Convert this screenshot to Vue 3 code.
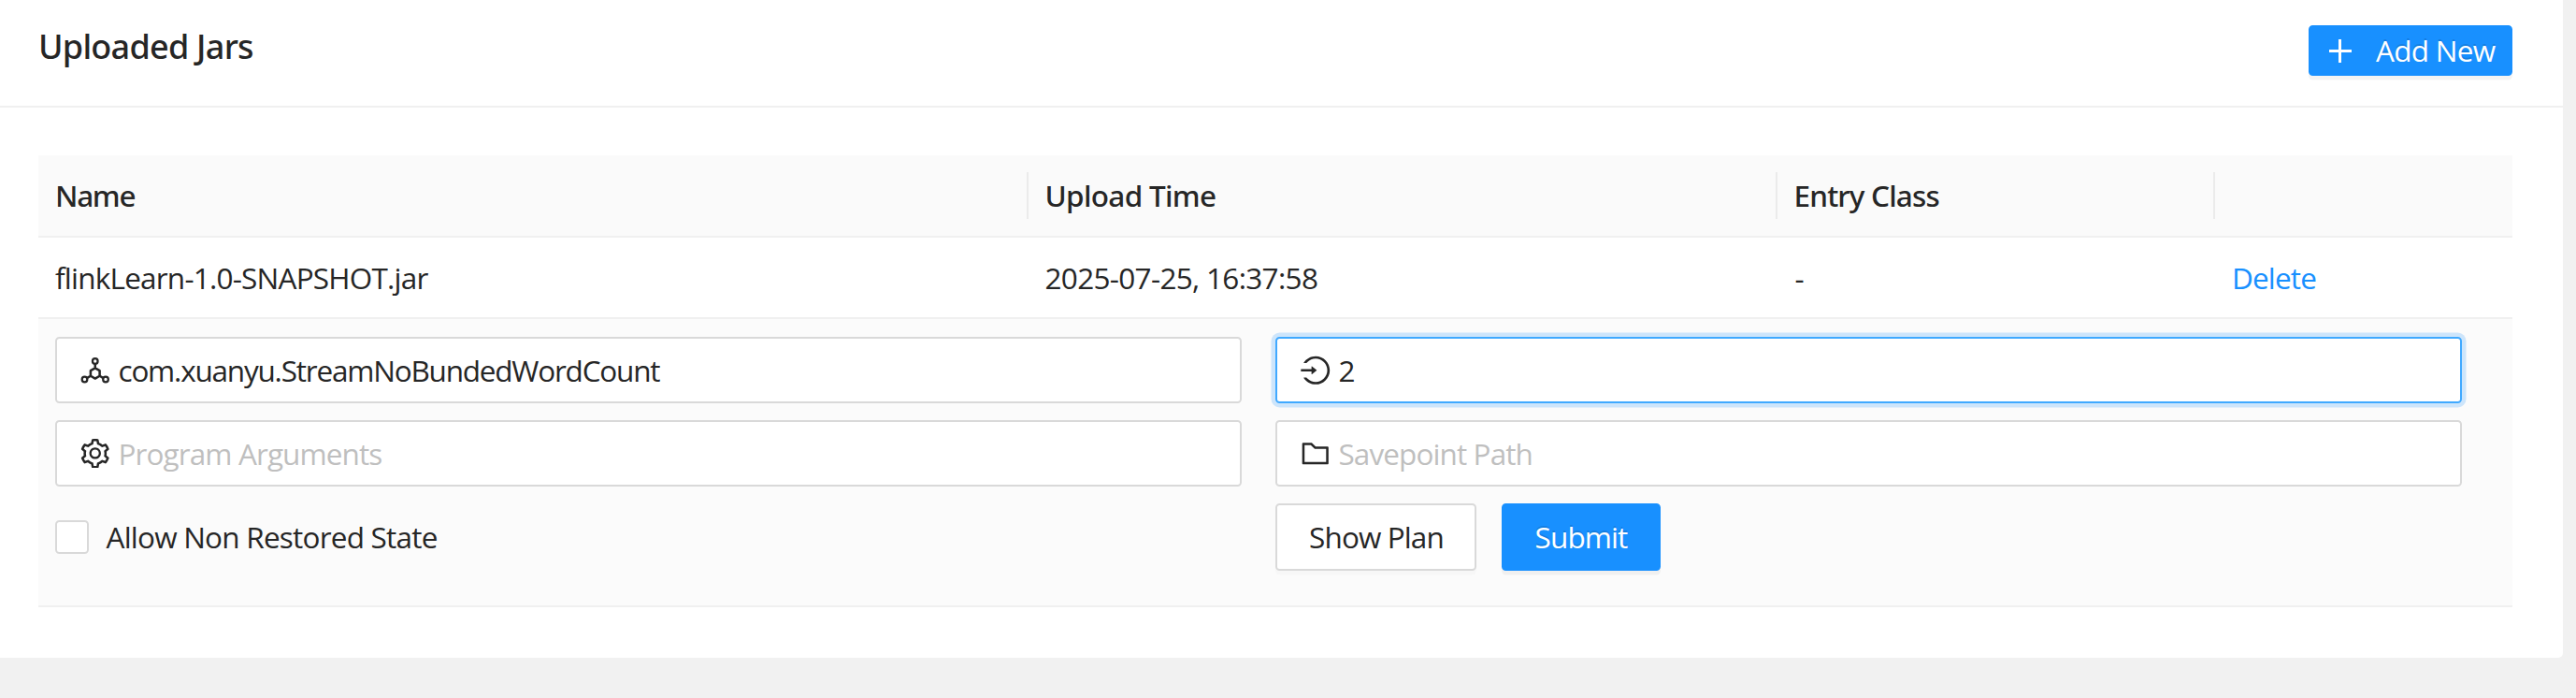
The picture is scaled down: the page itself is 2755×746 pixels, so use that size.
<script setup>
import { ref } from 'vue'

const entryClass = ref('com.xuanyu.StreamNoBundedWordCount')
const parallelism = ref('2')
const programArgs = ref('')
const savepointPath = ref('')
const allowNonRestored = ref(false)
</script>

<template>
  <div class="card">
    <header class="card-head">
      <h1 class="title">Uploaded Jars</h1>
      <button class="btn primary add">
        <svg class="plus" viewBox="0 0 24 25" aria-hidden="true">
          <path d="M0 12.5h24M11.5 0v25" stroke="currentColor" stroke-width="3" />
        </svg>
        <span>Add New</span>
      </button>
    </header>

    <main class="card-body">
      <div class="row thead">
        <div class="cell ls-name">Name</div>
        <div class="cell">Upload Time</div>
        <div class="cell ls-entry">Entry Class</div>
        <div class="cell"></div>
      </div>
      <div class="row trow">
        <div class="cell ls-file">flinkLearn-1.0-SNAPSHOT.jar</div>
        <div class="cell ls-date">2025-07-25, 16:37:58</div>
        <div class="cell dash">-</div>
        <div class="cell"><a class="link">Delete</a></div>
      </div>

      <form class="expanded" @submit.prevent>
        <label class="field">
          <svg class="icon" viewBox="64 64 896 896" fill="none" stroke="currentColor" aria-hidden="true">
            <g stroke-width="64">
              <circle cx="512" cy="234" r="80" />
              <circle cx="192" cy="790" r="80" />
              <circle cx="832" cy="790" r="80" />
            </g>
            <path stroke-width="72" stroke-linejoin="round" d="M512 444l138 79.5v159L512 762l-138-79.5v-159zM512 310v134M374 682.5l-113 65.5M650 682.5l113 65.5" />
          </svg>
          <input v-model="entryClass" class="ls-class" />
        </label>

        <label class="field focused">
          <svg class="icon" viewBox="64 64 896 896" fill="currentColor" aria-hidden="true">
            <path d="M521.7 82c-152.5-.4-286.7 78.5-363.4 197.7-3.4 5.3.4 12.3 6.7 12.3h70.3c4.8 0 9.3-2.1 12.3-5.8 7-8.5 14.5-16.7 22.4-24.5 32.6-32.5 70.5-58.1 112.7-75.9 43.6-18.4 90-27.8 137.9-27.8 47.9 0 94.3 9.3 137.9 27.8 42.2 17.8 80.1 43.4 112.7 75.9 32.6 32.5 58.1 70.4 76 112.5C865.7 417.8 875 464.1 875 512c0 47.9-9.4 94.2-27.8 137.8-17.8 42.1-43.4 80-76 112.5s-70.5 58.1-112.7 75.9A352.8 352.8 0 01520.6 866c-47.9 0-94.3-9.4-137.9-27.8A353.84 353.84 0 01270 762.3c-7.9-7.9-15.3-16.1-22.4-24.5-3-3.7-7.6-5.8-12.3-5.8H165c-6.3 0-10.2 7-6.7 12.3C234.9 863.2 368.5 942 520.6 942c236.2 0 428-190.1 430.4-425.6C953.4 277.1 761.3 82.6 521.7 82zM395.02 624v-76h-314c-4.4 0-8-3.6-8-8v-56c0-4.4 3.6-8 8-8h314v-76c0-6.7 7.8-10.5 13-6.3l141.9 112a8 8 0 010 12.6l-141.9 112c-5.2 4.1-13 .4-13-6.3z" />
          </svg>
          <input v-model="parallelism" />
        </label>

        <label class="field">
          <svg class="icon" viewBox="64 64 896 896" fill="currentColor" aria-hidden="true">
            <path d="M924.8 625.7l-65.5-56c3.1-19 4.7-38.4 4.7-57.8s-1.6-38.8-4.7-57.8l65.5-56a32.03 32.03 0 009.3-35.2l-.9-2.6a443.74 443.74 0 00-79.7-137.9l-1.8-2.1a32.12 32.12 0 00-35.1-9.5l-81.3 28.9c-30-24.6-63.5-44-99.7-57.6l-15.7-85a32.05 32.05 0 00-25.8-25.7l-2.7-.5c-52.1-9.4-106.9-9.4-159 0l-2.7.5a32.05 32.05 0 00-25.8 25.7l-15.8 85.4a351.86 351.86 0 00-99 57.4l-81.9-29.1a32 32 0 00-35.1 9.5l-1.8 2.1a446.02 446.02 0 00-79.7 137.9l-.9 2.6c-4.5 12.5-.8 26.5 9.3 35.2l66.3 56.6c-3.1 18.8-4.6 38-4.6 57.1 0 19.2 1.5 38.4 4.6 57.1L99 625.5a32.03 32.03 0 00-9.3 35.2l.9 2.6c18.1 50.4 44.9 96.9 79.7 137.9l1.8 2.1a32.12 32.12 0 0035.1 9.5l81.9-29.1c29.8 24.5 63.1 43.9 99 57.4l15.8 85.4a32.05 32.05 0 0025.8 25.7l2.7.5a449.4 449.4 0 00159 0l2.7-.5a32.05 32.05 0 0025.8-25.7l15.7-85a350 350 0 0099.7-57.6l81.3 28.9a32 32 0 0035.1-9.5l1.8-2.1c34.8-41.1 61.6-87.5 79.7-137.9l.9-2.6c4.5-12.3.8-26.3-9.3-35zM788.3 465.9c2.5 15.1 3.8 30.6 3.8 46.1s-1.3 31-3.8 46.1l-6.6 40.1 74.7 63.9a370.03 370.03 0 01-42.6 73.6L721 702.8l-31.4 25.8c-23.9 19.6-50.5 35-79.3 45.8l-38.1 14.3-17.9 97a377.5 377.5 0 01-85 0l-17.9-97.2-37.8-14.5c-28.5-10.8-55-26.2-78.7-45.7l-31.4-25.9-93.4 33.2c-17-22.9-31.2-47.6-42.6-73.6l75.5-64.5-6.5-40c-2.4-14.9-3.7-30.3-3.7-45.5 0-15.3 1.2-30.6 3.7-45.5l6.5-40-75.5-64.5c11.3-26.1 25.6-50.7 42.6-73.6l93.4 33.2 31.4-25.9c23.7-19.5 50.2-34.9 78.7-45.7l37.9-14.3 17.9-97.2c28.1-3.2 56.8-3.2 85 0l17.9 97 38.1 14.3c28.7 10.8 55.4 26.2 79.3 45.8l31.4 25.8 92.8-32.9c17 22.9 31.2 47.6 42.6 73.6L781.8 426l6.5 39.9zM512 326c-97.2 0-176 78.8-176 176s78.8 176 176 176 176-78.8 176-176-78.8-176-176-176zm79.2 255.2A111.6 111.6 0 01512 614c-29.9 0-58-11.7-79.2-32.8A111.6 111.6 0 01400 502c0-29.9 11.7-58 32.8-79.2C454 401.6 482.1 390 512 390c29.9 0 58 11.6 79.2 32.8A111.6 111.6 0 01624 502c0 29.9-11.7 58-32.8 79.2z" />
          </svg>
          <input v-model="programArgs" placeholder="Program Arguments" />
        </label>

        <label class="field">
          <svg class="icon" viewBox="64 64 896 896" fill="currentColor" aria-hidden="true">
            <path d="M880 298.4H521L403.7 186.2a8.15 8.15 0 00-5.5-2.2H144c-17.7 0-32 14.3-32 32v592c0 17.7 14.3 32 32 32h736c17.7 0 32-14.3 32-32V330.4c0-17.7-14.3-32-32-32zM840 768H184V256h188.5l119.6 114.4H840V768z" />
          </svg>
          <input v-model="savepointPath" placeholder="Savepoint Path" />
        </label>

        <label class="check">
          <input v-model="allowNonRestored" type="checkbox" class="box" />
          <span>Allow Non Restored State</span>
        </label>

        <div class="actions">
          <button class="btn plan">Show Plan</button>
          <button class="btn primary submit">Submit</button>
        </div>
      </form>
    </main>
  </div>
</template>

<style>
html,
body {
  background: #f1f1f1;
}
</style>

<style scoped>
.card {
  box-sizing: border-box;
  width: 2741px;
  height: 703px;
  background: #fff;
  border-radius: 0 0 5px 0;
  color: #262626;
  font: 400 31.5px/1.5 "Open Sans", "Noto Sans", sans-serif;
  letter-spacing: -0.85px;
}
.card-head {
  box-sizing: border-box;
  height: 115px;
  padding: 27px 54px 0 41px;
  border-bottom: 2px solid #f0f0f0;
  display: flex;
  justify-content: space-between;
  align-items: flex-start;
}
.title {
  margin: 0;
  font: 500 36px/46px "Noto Sans", sans-serif;
  letter-spacing: -0.75px;
}
.btn {
  box-sizing: border-box;
  display: flex;
  align-items: center;
  justify-content: center;
  padding: 0;
  border: 2px solid #d9d9d9;
  border-radius: 4.5px;
  background: #fff;
  box-shadow: 0 4.5px 0 rgba(0, 0, 0, 0.016);
  color: inherit;
  font: inherit;
  letter-spacing: -0.9px;
}
.primary {
  border-color: #1890ff;
  background: #1890ff;
  color: #fff;
  text-shadow: 0 -2.25px 0 rgba(0, 0, 0, 0.12);
  box-shadow: 0 4.5px 0 rgba(0, 0, 0, 0.045);
}
.add {
  width: 218px;
  height: 54px;
  justify-content: flex-start;
  padding-left: 20px;
  gap: 26px;
  letter-spacing: -0.72px;
}
.plus {
  width: 24px;
  height: 25px;
}
.card-body {
  padding: 51px 54px 0 41px;
}
.row {
  display: grid;
  grid-template-columns: 1058.5px 801px 468.5px 1fr;
  align-items: center;
  border-bottom: 2px solid #f0f0f0;
}
.thead {
  height: 86px;
  background: #fafafa;
  font-family: "Noto Sans", sans-serif;
  font-weight: 500;
  letter-spacing: -0.68px;
}
.trow {
  height: 85px;
}
.cell {
  box-sizing: border-box;
  padding-left: 18px;
}
.thead .cell {
  height: 50px;
  line-height: 50px;
  border-right: 2px solid #ebebeb;
}
.thead .cell:last-child {
  border-right: 0;
}
.ls-name {
  letter-spacing: -1.3px;
}
.ls-entry {
  letter-spacing: -0.83px;
}
.ls-file {
  letter-spacing: -0.78px;
}
.ls-date {
  letter-spacing: -0.68px;
}
.dash {
  padding-left: 19px;
}
.link {
  color: #1890ff;
}
.expanded {
  box-sizing: border-box;
  height: 308px;
  padding: 19px 54px 0 18px;
  background: #fbfbfb;
  border-bottom: 2px solid #f0f0f0;
  display: grid;
  grid-template-columns: 1269px 1269px;
  grid-template-rows: 71px 71px 72px;
  column-gap: 36px;
  row-gap: 18px;
}
.expanded > :nth-child(n + 3) {
  position: static;
}
.field {
  box-sizing: border-box;
  display: flex;
  align-items: center;
  gap: 9px;
  padding: 0 25px;
  border: 2px solid #d9d9d9;
  border-radius: 4.5px;
  background: #fff;
}
.focused {
  border-color: #40a9ff;
  box-shadow: 0 0 0 4.5px rgba(24, 144, 255, 0.2);
}
.icon {
  width: 31.5px;
  height: 31.5px;
  flex: none;
}
.field input {
  flex: 1;
  min-width: 0;
  padding: 0;
  border: 0;
  outline: 0;
  background: none;
  color: inherit;
  font: inherit;
  letter-spacing: -0.9px;
}
.field .ls-class {
  letter-spacing: -1.21px;
}
.field input::placeholder {
  color: #bfbfbf;
  opacity: 1;
}
.check {
  display: flex;
  align-items: center;
  gap: 18.5px;
  letter-spacing: -0.78px;
}
.box {
  appearance: none;
  box-sizing: border-box;
  width: 36px;
  height: 36px;
  margin: 0;
  border: 2px solid #d9d9d9;
  border-radius: 4.5px;
  background: #fff;
}
.actions {
  display: flex;
  gap: 27px;
}
.plan {
  width: 215px;
  height: 72px;
  padding-left: 1px;
}
.submit {
  width: 170px;
  height: 72px;
}
</style>
